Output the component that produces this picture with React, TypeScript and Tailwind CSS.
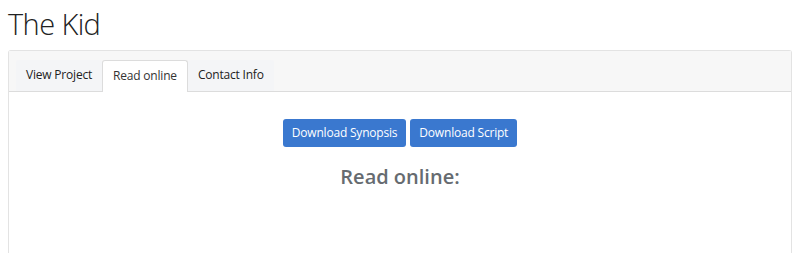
export default function App() {
  const tabs = ["View Project", "Read online", "Contact Info"];
  const active = "Read online";

  return (
    <div className="min-h-[253px] bg-white px-2 font-['Open_Sans',sans-serif] text-[#212529]">
      <h1 className="pt-[6px] text-[29px] font-light leading-[36px] tracking-[-0.6px] text-[#222]">
        The Kid
      </h1>

      <div className="mt-[8px] h-[205px] rounded-t-[3px] border border-b-0 border-[#e3e3e3]">
        <div className="flex border-b border-[#dcdcdc] bg-[#f7f7f7] px-[7px] pt-[9px]">
          {tabs.map((t) =>
            t === active ? (
              <div
                key={t}
                className="-mb-px flex h-[32px] items-end rounded-t-[3px] border border-b-0 border-[#dcdcdc] bg-white px-[10px] pb-[7px] text-[12px] tracking-[-0.2px] text-[#333]"
              >
                {t}
              </div>
            ) : (
              <div
                key={t}
                className="flex h-[31px] items-center rounded-t-[3px] bg-[#f4f5f7] px-[10px] pb-[1px] text-[12px] tracking-[-0.2px] text-[#222]"
              >
                {t}
              </div>
            )
          )}
        </div>

        <div className="flex flex-col items-center pt-[27px]">
          <div className="flex gap-[4px]">
            <button className="h-[28px] rounded-[3px] bg-[#3a78cf] px-[9px] text-[12px] tracking-[-0.2px] text-white">
              Download Synopsis
            </button>
            <button className="h-[28px] rounded-[3px] bg-[#3a78cf] px-[9px] text-[12px] tracking-[-0.2px] text-white">
              Download Script
            </button>
          </div>
          <h2 className="mt-[18px] text-[20px] font-semibold leading-[24px] text-[#666b70]">
            Read online:
          </h2>
        </div>
      </div>
    </div>
  );
}
